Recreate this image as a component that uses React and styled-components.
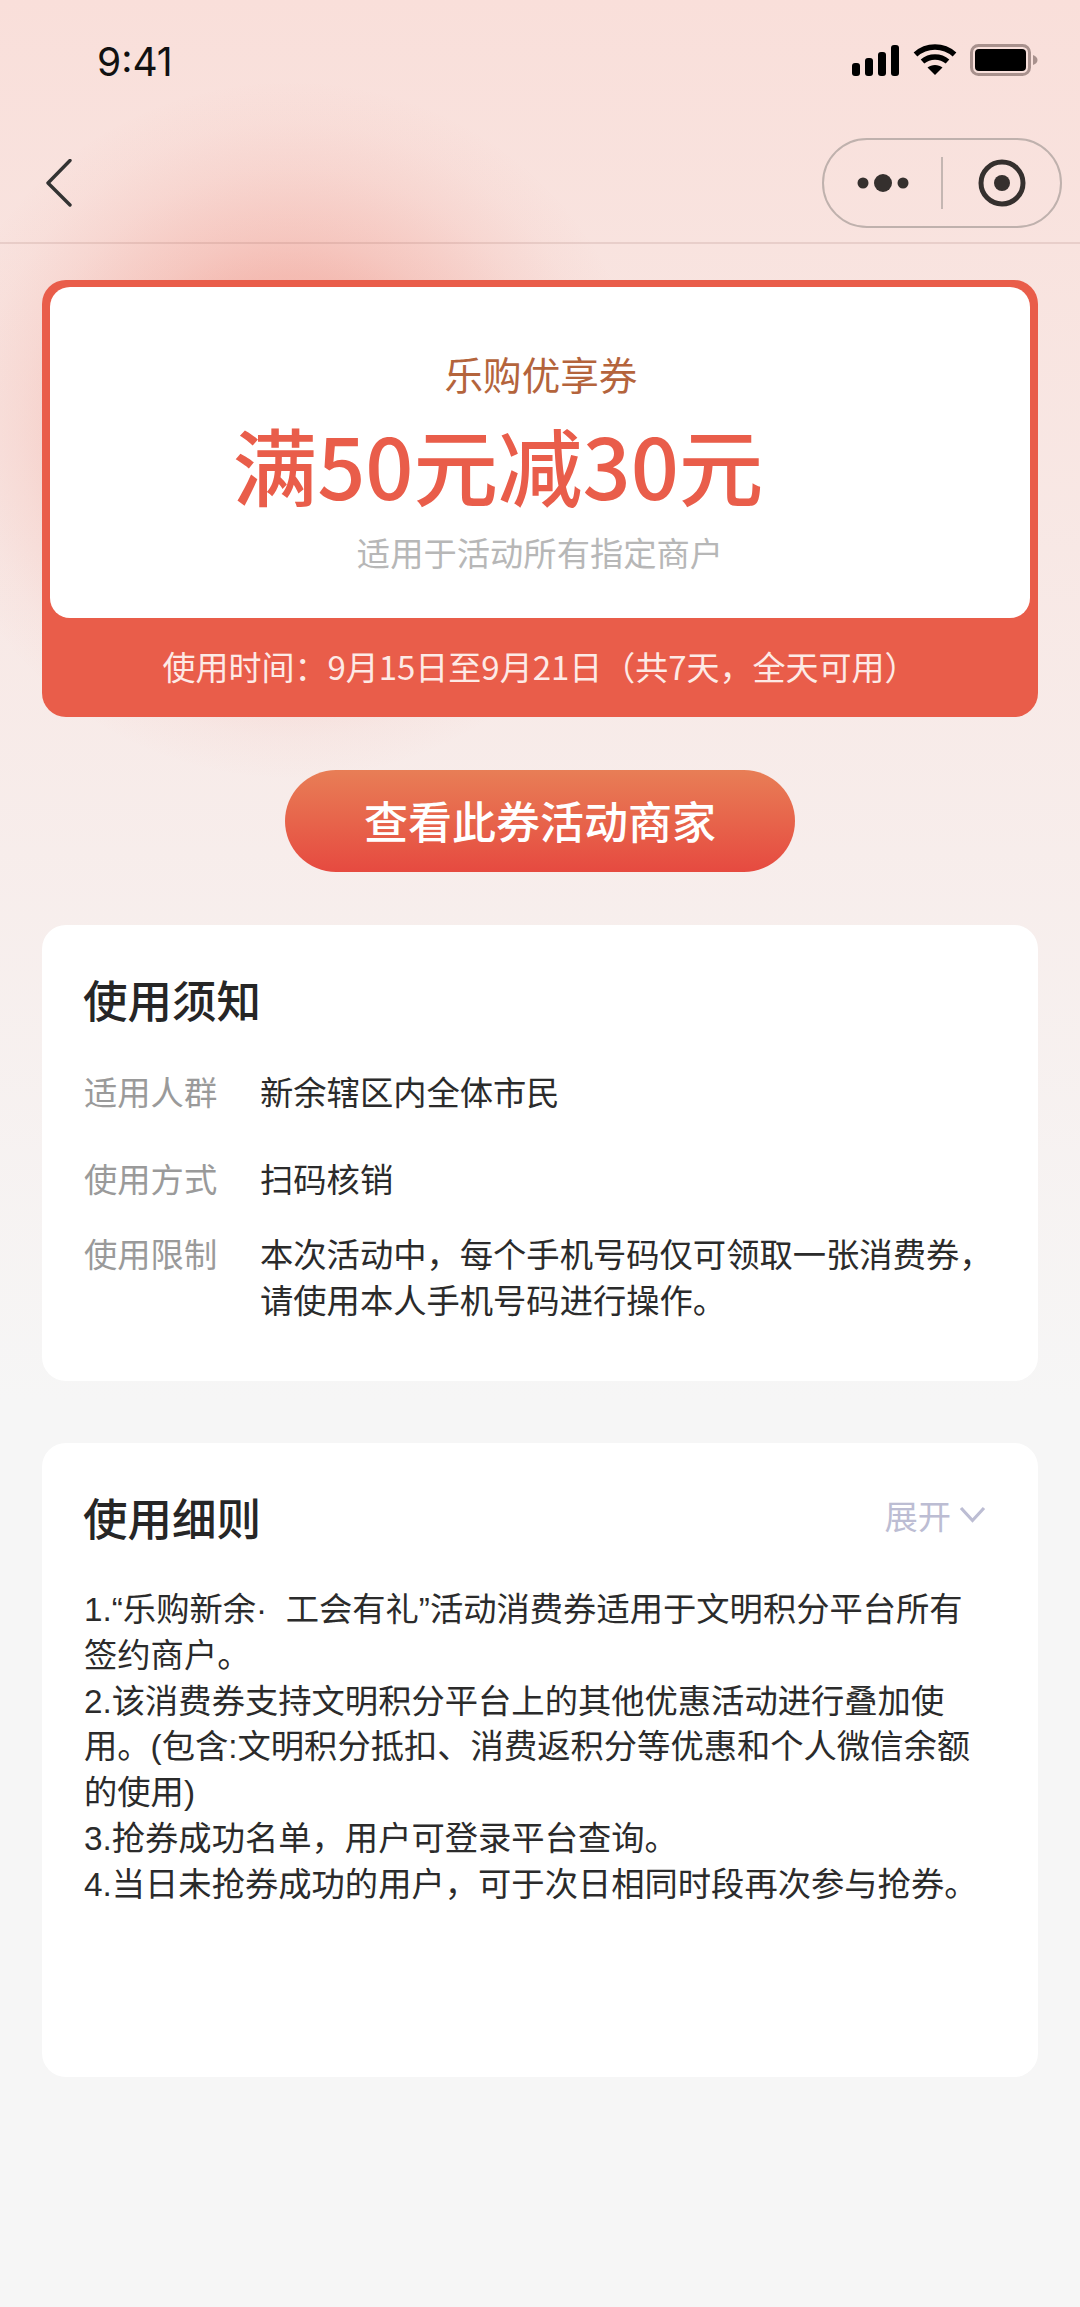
import React from "react";
import styled, { createGlobalStyle } from "styled-components";

const Global = createGlobalStyle`
  html, body { margin: 0; padding: 0; background: #f6f6f6; }
  * { box-sizing: border-box; }
`;

const Page = styled.div`
  width: 1080px;
  height: 2307px;
  overflow: hidden;
  font-family: "Noto Sans CJK SC", "Noto Sans", sans-serif;
  color: #262626;
  background:
    radial-gradient(
      ellipse 360px 350px at 290px 430px,
      rgba(235, 95, 75, 0.46) 0%,
      rgba(235, 95, 75, 0.3) 44%,
      rgba(235, 95, 75, 0.21) 55%,
      rgba(235, 95, 75, 0.09) 75%,
      rgba(235, 95, 75, 0.03) 88%,
      rgba(235, 95, 75, 0) 100%
    ),
    linear-gradient(180deg, #f9dfda 0, #f6f6f6 1400px);
`;

const StatusBar = styled.div`
  height: 130px;
  display: flex;
  align-items: flex-start;
  justify-content: space-between;
  padding: 36px 42px 0 97px;
`;

const Clock = styled.div`
  font-family: Inter, "Liberation Sans", sans-serif;
  font-size: 39px;
  line-height: 52px;
  font-weight: 400;
  color: #111;
`;

const StatusIcons = styled.div`
  display: flex;
  align-items: center;
  gap: 13px;
  margin-top: 8px;
`;

const NavBar = styled.div`
  height: 114px;
  display: flex;
  align-items: flex-start;
  justify-content: space-between;
  padding: 8px 18px 0 46px;
  border-bottom: 2px solid rgba(120, 70, 60, 0.13);
`;

const BackButton = styled.div`
  display: flex;
  margin-top: 21px;
`;

const Capsule = styled.div`
  width: 240px;
  height: 90px;
  border: 2px solid #bfb1ad;
  border-radius: 45px;
  display: flex;
  align-items: center;
`;

const CapsuleSide = styled.div`
  flex: 1;
  display: flex;
  align-items: center;
  justify-content: center;
`;

const CapsuleDivider = styled.div`
  width: 2px;
  height: 52px;
  background: #c4b6b2;
`;

const Content = styled.div`
  padding: 36px 42px 0;
  display: flex;
  flex-direction: column;
`;

const Ticket = styled.div`
  height: 437px;
  background: #e95d4a;
  border-radius: 24px;
  padding: 7px 8px 0;
  display: flex;
  flex-direction: column;
`;

const TicketBody = styled.div`
  height: 331px;
  background: #fff;
  border-radius: 20px;
  display: flex;
  flex-direction: column;
  align-items: center;
  padding-top: 58px;
`;

const TicketName = styled.div`
  font-size: 38.6px;
  line-height: 56px;
  color: #b4643c;
  padding-left: 2px;
`;

const TicketAmount = styled.div`
  font-size: 84.5px;
  line-height: 110px;
  font-weight: 500;
  color: #e95d4a;
  margin-top: 7px;
  padding-right: 84px;
  white-space: nowrap;
`;

const TicketScope = styled.div`
  font-size: 33.3px;
  line-height: 48px;
  color: #b7b7b7;
  margin-top: 10px;
`;

const TicketFooter = styled.div`
  flex: 1;
  display: flex;
  align-items: center;
  justify-content: center;
  color: #fdeae6;
  font-size: 33px;
  line-height: 48px;
  white-space: nowrap;
  padding-bottom: 4px;
`;

const ActionRow = styled.div`
  display: flex;
  justify-content: center;
  margin-top: 53px;
`;

const ActionButton = styled.div`
  width: 510px;
  height: 102px;
  border-radius: 51px;
  background: linear-gradient(180deg, #e87e56 0%, #e64a40 100%);
  color: #fff;
  font-size: 44px;
  font-weight: 500;
  display: flex;
  align-items: center;
  justify-content: center;
  padding-bottom: 3px;
`;

const Card = styled.section`
  background: #fff;
  border-radius: 24px;
  height: ${(p) => p.$height}px;
  margin-top: ${(p) => p.$top}px;
  padding: ${(p) => p.$pad}px 42px 0;
`;

const CardHeader = styled.div`
  display: flex;
  align-items: center;
  justify-content: space-between;
  height: 62px;
`;

const CardTitle = styled.h2`
  margin: 0 0 0 -1px;
  font-size: 44.5px;
  line-height: 62px;
  font-weight: 500;
  color: #262626;
`;

const Expand = styled.div`
  display: flex;
  align-items: center;
  gap: 8px;
  color: #bcbdd3;
  font-size: 33.3px;
  padding: 0 10px 5px 0;
`;

const Rows = styled.div`
  display: flex;
  flex-direction: column;
  margin-top: 38px;
`;

const Row = styled.div`
  display: grid;
  grid-template-columns: 176px 1fr;
  font-size: 33.3px;
  line-height: 46px;
  margin-bottom: ${(p) => p.$gap}px;
`;

const RowLabel = styled.div`
  color: #9a9a9a;
`;

const RowValue = styled.div`
  color: #2b2b2b;
`;

const Rules = styled.div`
  margin-top: 39px;
  font-family: "Liberation Sans", "Noto Sans CJK SC", sans-serif;
  font-size: 33.3px;
  line-height: 45.8px;
  color: #2b2b2b;
  width: 920px;
`;

const RuleLine = styled.div`
  white-space: pre;
`;

const Signal = () => (
  <svg width="48" height="31" viewBox="0 0 48 31" fill="#000">
    <rect x="0" y="18" width="8" height="13" rx="3" />
    <rect x="13" y="13" width="8" height="18" rx="3" />
    <rect x="26" y="7" width="8" height="24" rx="3" />
    <rect x="39" y="0" width="8" height="31" rx="3" />
  </svg>
);

const Wifi = () => (
  <svg width="44" height="32" viewBox="0 0 44 32" fill="none" stroke="#000" strokeWidth="5.5">
    <path d="M2.5 10.5C13.5 0.5 30.5 0.5 41.5 10.5" />
    <path d="M9.5 17.5C16.5 11.5 27.5 11.5 34.5 17.5" />
    <path d="M22 31L14.5 23.5C18.5 20 25.5 20 29.5 23.5Z" fill="#000" stroke="none" />
  </svg>
);

const Battery = () => (
  <svg width="68" height="32" viewBox="0 0 68 32" fill="none">
    <rect x="1.5" y="1.5" width="58" height="29" rx="7" stroke="#a8918d" strokeWidth="3" />
    <rect x="5" y="5" width="51" height="22" rx="4" fill="#000" />
    <path d="M63 11C66 12 67.5 14 67.5 16C67.5 18 66 20 63 21Z" fill="#a8918d" />
  </svg>
);

const BackIcon = () => (
  <svg
    width="26"
    height="48"
    viewBox="0 0 26 48"
    fill="none"
    stroke="#333"
    strokeWidth="3.4"
    strokeLinecap="round"
    strokeLinejoin="round"
  >
    <path d="M24 1.5L2 24L24 46" />
  </svg>
);

const MoreIcon = () => (
  <svg width="52" height="20" viewBox="0 0 52 20" fill="#35302e">
    <circle cx="6" cy="10" r="5.5" />
    <circle cx="26" cy="10" r="9" />
    <circle cx="46" cy="10" r="5.5" />
  </svg>
);

const TargetIcon = () => (
  <svg width="48" height="48" viewBox="0 0 48 48" fill="none">
    <circle cx="24" cy="24" r="21" stroke="#35302e" strokeWidth="5" />
    <circle cx="24" cy="24" r="8" fill="#35302e" />
  </svg>
);

const ChevronDown = () => (
  <svg width="27" height="17" viewBox="0 0 27 17" fill="none" stroke="#bcbdd3" strokeWidth="3.2">
    <path d="M2 2L13.5 14.5L25 2" />
  </svg>
);

const rules = [
  "1.“乐购新余·  工会有礼”活动消费券适用于文明积分平台所有",
  "签约商户。",
  "2.该消费券支持文明积分平台上的其他优惠活动进行叠加使",
  "用。(包含:文明积分抵扣、消费返积分等优惠和个人微信余额",
  "的使用)",
  "3.抢券成功名单，用户可登录平台查询。",
  "4.当日未抢券成功的用户，可于次日相同时段再次参与抢券。",
];

export default function App() {
  return (
    <Page>
      <Global />
      <StatusBar>
        <Clock>9:41</Clock>
        <StatusIcons>
          <Signal />
          <Wifi />
          <Battery />
        </StatusIcons>
      </StatusBar>
      <NavBar>
        <BackButton>
          <BackIcon />
        </BackButton>
        <Capsule>
          <CapsuleSide>
            <MoreIcon />
          </CapsuleSide>
          <CapsuleDivider />
          <CapsuleSide>
            <TargetIcon />
          </CapsuleSide>
        </Capsule>
      </NavBar>
      <Content>
        <Ticket>
          <TicketBody>
            <TicketName>乐购优享券</TicketName>
            <TicketAmount>满50元减30元</TicketAmount>
            <TicketScope>适用于活动所有指定商户</TicketScope>
          </TicketBody>
          <TicketFooter>使用时间：9月15日至9月21日（共7天，全天可用）</TicketFooter>
        </Ticket>
        <ActionRow>
          <ActionButton>查看此券活动商家</ActionButton>
        </ActionRow>
        <Card $height={456} $top={53} $pad={43}>
          <CardHeader>
            <CardTitle>使用须知</CardTitle>
          </CardHeader>
          <Rows>
            <Row $gap={41}>
              <RowLabel>适用人群</RowLabel>
              <RowValue>新余辖区内全体市民</RowValue>
            </Row>
            <Row $gap={29}>
              <RowLabel>使用方式</RowLabel>
              <RowValue>扫码核销</RowValue>
            </Row>
            <Row $gap={0}>
              <RowLabel>使用限制</RowLabel>
              <RowValue>
                本次活动中，每个手机号码仅可领取一张消费券，
                <br />
                请使用本人手机号码进行操作。
              </RowValue>
            </Row>
          </Rows>
        </Card>
        <Card $height={634} $top={62} $pad={43}>
          <CardHeader>
            <CardTitle>使用细则</CardTitle>
            <Expand>
              展开
              <ChevronDown />
            </Expand>
          </CardHeader>
          <Rules>
            {rules.map((line) => (
              <RuleLine key={line}>{line}</RuleLine>
            ))}
          </Rules>
        </Card>
      </Content>
    </Page>
  );
}
